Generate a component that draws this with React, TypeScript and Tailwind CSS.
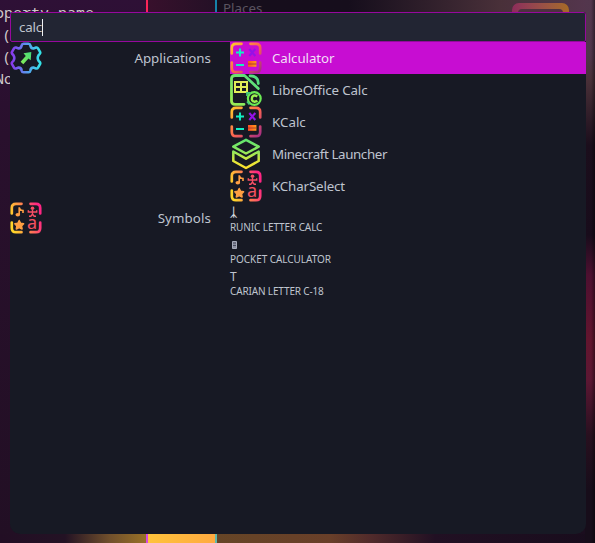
import React from 'react';

type IconProps = { id: string };

const CORNERS = 'M1.8 11.5V6Q1.8 1.8 6 1.8H11.5M20.5 1.8H26Q30.2 1.8 30.2 6V11.5M30.2 20.5V26Q30.2 30.2 26 30.2H20.5M11.5 30.2H6Q1.8 30.2 1.8 26V20.5';

function GearIcon() {
  return (
    <svg viewBox="0 0 32 32" className="size-8 shrink-0" fill="none">
      <defs>
        <linearGradient id="gear" gradientUnits="userSpaceOnUse" x1="1" y1="0" x2="31" y2="0">
          <stop stopColor="#8a35ed" />
          <stop offset=".5" stopColor="#5b93ed" />
          <stop offset="1" stopColor="#32e6e8" />
        </linearGradient>
        <linearGradient id="arrow" x1="1" y1="0" x2="0" y2="1">
          <stop stopColor="#42d979" />
          <stop offset="1" stopColor="#8aed57" />
        </linearGradient>
      </defs>
      <path
        d="M13.5 1.7H18.5Q20 1.7 20.3 3.3Q20.8 6.5 23.4 6.4L26 5.6Q27.3 5.2 28 6.4L30 9.8Q30.6 11 29.7 12L28.6 13.2Q26.8 16 28.6 18.8L29.7 20Q30.6 21 30 22.2L28 25.6Q27.3 26.8 26 26.4L23.4 25.6Q20.8 25.5 20.3 28.7Q20 30.3 18.5 30.3H13.5Q12 30.3 11.7 28.7Q11.2 25.5 8.6 25.6L6 26.4Q4.7 26.8 4 25.6L2 22.2Q1.4 21 2.3 20L3.4 18.8Q5.2 16 3.4 13.2L2.3 12Q1.4 11 2 9.8L4 6.4Q4.7 5.2 6 5.6L8.6 6.4Q11.2 6.5 11.7 3.3Q12 1.7 13.5 1.7Z"
        stroke="url(#gear)"
        strokeWidth="2.6"
        strokeLinejoin="round"
      />
      <path d="M13.5 11.3L21.3 10L20.7 18.3L18.5 16.4L13.3 22.3L10.6 19.8L15.8 14Z" fill="url(#arrow)" />
    </svg>
  );
}

function CalculatorIcon({ id }: IconProps) {
  return (
    <svg viewBox="0 0 32 32" className="size-8 shrink-0" fill="none">
      <defs>
        <linearGradient id={id} gradientUnits="userSpaceOnUse" x1="2" y1="2" x2="30" y2="30">
          <stop stopColor="#ffc42b" />
          <stop offset=".5" stopColor="#ff6650" />
          <stop offset="1" stopColor="#a62e82" />
        </linearGradient>
        <linearGradient id={id + 'eq'} x1="0" y1="0" x2="1" y2="0">
          <stop stopColor="#ff4d24" />
          <stop offset="1" stopColor="#ff9c1b" />
        </linearGradient>
      </defs>
      <path d={CORNERS} stroke={`url(#${id})`} strokeWidth="2.7" strokeLinecap="round" />
      <path d="M6 10.5H14M10 6.5V14.5M6 23H14" stroke="#12efc4" strokeWidth="1.9" />
      <path d="M19.3 7L25.3 14M25.3 7L19.3 14" stroke="#9412e7" strokeWidth="2.1" />
      <rect x="18" y="19" width="8.4" height="5.8" fill={`url(#${id}eq)`} />
      <path d="M18 22H26.4" stroke="#a33a2b" strokeWidth=".9" />
    </svg>
  );
}

function SheetIcon() {
  return (
    <svg viewBox="0 0 32 32" className="size-8 shrink-0" fill="none">
      <defs>
        <linearGradient id="sheet" gradientUnits="userSpaceOnUse" x1="0" y1="31" x2="30" y2="0">
          <stop stopColor="#a0ed50" />
          <stop offset="1" stopColor="#48dc88" />
        </linearGradient>
      </defs>
      <path d="M14 30.3H5Q1.5 30.3 1.5 27V4.5Q1.5 1.5 5 1.5H14.5L28.3 14.5" stroke="url(#sheet)" strokeWidth="2.8" strokeLinecap="round" strokeLinejoin="round" />
      <path d="M20 1.8Q28.3 1.8 28.3 9.5" stroke="url(#sheet)" strokeWidth="2.8" strokeLinecap="round" />
      <path d="M5 8H17V18H5ZM11 8V18M5 13H17" stroke="#e0ee58" strokeWidth="2" />
      <circle cx="24.3" cy="24.5" r="6.4" stroke="#6bea54" strokeWidth="2.2" />
      <path d="M27.3 22.5Q24 20.3 22.2 23Q21 27 24.3 27.7Q26.3 27.7 27.3 26.6" stroke="#9bf04e" strokeWidth="2.4" />
      <path d="M17 22V19H20.5M17 27.5L19.5 30.5" stroke="#44c779" strokeWidth="1.8" />
    </svg>
  );
}

function LayersIcon() {
  return (
    <svg viewBox="0 0 32 32" className="size-8 shrink-0" fill="none" strokeWidth="2.5" strokeLinejoin="round" strokeLinecap="round">
      <defs>
        <linearGradient id="layers" gradientUnits="userSpaceOnUse" x1="16" y1="1" x2="16" y2="31">
          <stop stopColor="#5ee370" />
          <stop offset=".4" stopColor="#8ce75e" />
          <stop offset=".75" stopColor="#e2e63a" />
          <stop offset="1" stopColor="#ffe02b" />
        </linearGradient>
      </defs>
      <g stroke="url(#layers)">
        <path d="M16 1.8L28.7 8.7L16 15.5L3.3 8.7Z" />
        <path d="M3.3 13.5L16 20.7L28.7 13.5V23L16 30L3.3 23Z" />
      </g>
    </svg>
  );
}

function CharactersIcon({ id }: IconProps) {
  return (
    <svg viewBox="0 0 32 32" className="size-8 shrink-0" fill="none">
      <defs>
        <linearGradient id={id} gradientUnits="userSpaceOnUse" x1="2" y1="20" x2="30" y2="12">
          <stop stopColor="#ffd42a" />
          <stop offset=".5" stopColor="#ff8050" />
          <stop offset="1" stopColor="#ff2583" />
        </linearGradient>
      </defs>
      <path d={CORNERS} stroke={`url(#${id})`} strokeWidth="2.7" strokeLinecap="round" />
      <path d="M9.2 13V5.3Q9.8 8.5 13 8.5V11" stroke="#ffa044" strokeWidth="1.6" />
      <ellipse cx="7.8" cy="12.8" rx="2.3" ry="1.8" fill="#ffa044" />
      <path d="M9.2 18.5L10.6 21.3L13.6 21.8L11.5 24L12.1 27L9.2 25.6L6.3 27L6.9 24L4.8 21.8L7.8 21.3Z" fill="#ff9f42" stroke="#ff9f42" strokeWidth="1.5" strokeLinejoin="round" />
      <circle cx="22.5" cy="6.2" r="1.8" fill="#f84f65" />
      <path d="M18.3 8.2V10H26.7V8.2M22.5 8V12.5M19 14.2H20.8L22.5 12.2L24.2 14.2H26" stroke="#f84f65" strokeWidth="1.4" />
      <text x="17" y="27" fontSize="18" fill="#f45261" className="font-['Noto_Sans',sans-serif]">a</text>
    </svg>
  );
}

function PocketCalculator() {
  return (
    <svg viewBox="0 0 7 8" className="ml-px h-2 w-[7px]" fill="none">
      <path d="M1.5 .5H5.5V7.5H1.5Z" fill="#8b8ea0" stroke="#a6abba" />
      <path d="M2 2H5M2 4.5H5" stroke="#2b2f40" strokeWidth=".7" />
    </svg>
  );
}

const applications = [
  { name: 'Calculator', icon: <CalculatorIcon id="calc1" />, tracking: 'tracking-[-0.08px]' },
  { name: 'LibreOffice Calc', icon: <SheetIcon />, tracking: 'tracking-[-0.13px]' },
  { name: 'KCalc', icon: <CalculatorIcon id="calc2" />, tracking: '' },
  { name: 'Minecraft Launcher', icon: <LayersIcon />, tracking: 'tracking-[-0.38px]' },
  { name: 'KCharSelect', icon: <CharactersIcon id="chars1" />, tracking: 'tracking-[-0.15px]' },
];

const symbols = [
  { name: 'RUNIC LETTER CALC', glyph: <span className="-mt-px font-bold text-[#d2d5dd]">ᛣ</span>, tracking: 'tracking-[-0.1px]' },
  { name: 'POCKET CALCULATOR', glyph: <PocketCalculator />, tracking: 'tracking-[-0.05px]' },
  { name: 'CARIAN LETTER C-18', glyph: 'T', tracking: 'tracking-[-0.15px]' },
];

function Desktop() {
  return (
    <div className="absolute inset-0 flex flex-col justify-between bg-[#1b0d1e]">
      <div className="absolute inset-y-0 right-0 w-[10px] bg-[linear-gradient(to_right,transparent_60%,#0006),linear-gradient(to_bottom,#53364d_0px,#50354a_55px,#493038_80px,#1b0e1c_145px,#180c1b_235px,#4d1030_275px,#62152e_340px,#5c1733_380px,#28101f_435px,#170d1a_490px)]" />
      <div className="flex h-[534px]">
        <div className="w-[146px] bg-linear-to-b from-[#2e1036] via-[#29102d] via-25% to-[#220f24] pt-px font-['Noto_Sans_Mono','DejaVu_Sans_Mono',monospace] text-[15px] leading-[22px] text-[#d0c9ca]">
          <div className="-ml-[5px]">operty name</div>
          <div className="pl-[2px]">(</div>
          <div className="pl-[2px]">(</div>
          <div className="-ml-[5px]">No</div>
        </div>
        <div className="h-3 w-[71px] border-x-2 border-l-[#fc2559] border-r-[#1682aa] bg-linear-to-r from-[#38102c] to-[#241026]" />
        <div className="flex h-3 flex-1 justify-between bg-linear-to-r from-[#160e1c] from-35% via-[#493039] via-75% to-[#55364f] pl-[6px] pr-[26px]">
          <span className="-mt-px text-[13.33px] leading-[18px] text-[#5b5460]">Places</span>
          <div className="mt-[3px] h-8 w-[57px] rounded-[7px] bg-linear-to-r from-[#8c2c5a] to-[#a66b23] px-[6px] pt-[6px]">
            <div className="h-6 rounded-[4px] bg-[#4c323f]" />
          </div>
        </div>
      </div>
      <div className="flex h-[9px] bg-[linear-gradient(to_right,#220e24_0px,#231224_65px,#71502c_110px,#977027_145px,#664526_217px,#693f29_330px,#512b2b_370px,#211023_435px,#180c1c_595px)] pl-[146px]">
        <div className="w-[71px] border-x-2 border-l-[#d647e4] border-r-[#62b9ad] bg-linear-to-r from-[#ffc33b] to-[#ffaa40]" />
      </div>
    </div>
  );
}

export default function App() {
  return (
    <main className="relative h-[543px] w-[595px] overflow-hidden pl-[10px] pt-3 font-['Noto_Sans',sans-serif] text-[13.33px] text-[#bfc4cf]">
      <Desktop />
      <section className="relative h-[522px] w-[576px] overflow-hidden rounded-b-[10px] rounded-t-[3px] bg-[#171924]">
        <div className="flex h-[30px] items-center rounded-[2px] border border-[#97089e] bg-[#222533] pl-2">
          <span className="pt-px tracking-[-0.2px]">calc</span>
          <span className="h-[17px] w-px bg-[#eef0f5]" />
        </div>
        <div className="flex h-40">
          <div className="flex h-8 w-[201px] items-center justify-between">
            <GearIcon />
            <span className="pt-[2px]">Applications</span>
          </div>
          <div className="ml-[19px] flex-1">
            {applications.map((app, index) => (
              <div key={app.name} className={index === 0 ? 'flex h-8 items-center gap-[10px] bg-[#c70dd2] text-[#f2dff7]' : 'flex h-8 items-center gap-[10px]'}>
                {app.icon}
                <span className={`pt-[2px] ${app.tracking}`}>{app.name}</span>
              </div>
            ))}
          </div>
        </div>
        <div className="flex">
          <div className="flex h-8 w-[201px] items-center justify-between">
            <CharactersIcon id="chars2" />
            <span className="pt-[2px] tracking-[0.1px]">Symbols</span>
          </div>
          <div className="ml-[19px] flex-1 pt-[3px]">
            {symbols.map((symbol) => (
              <div key={symbol.name} className="h-8">
                <div className="flex h-[15px] items-center text-[12px] leading-4">{symbol.glyph}</div>
                <div className={`text-[10px] leading-[14px] ${symbol.tracking}`}>{symbol.name}</div>
              </div>
            ))}
          </div>
        </div>
      </section>
    </main>
  );
}
